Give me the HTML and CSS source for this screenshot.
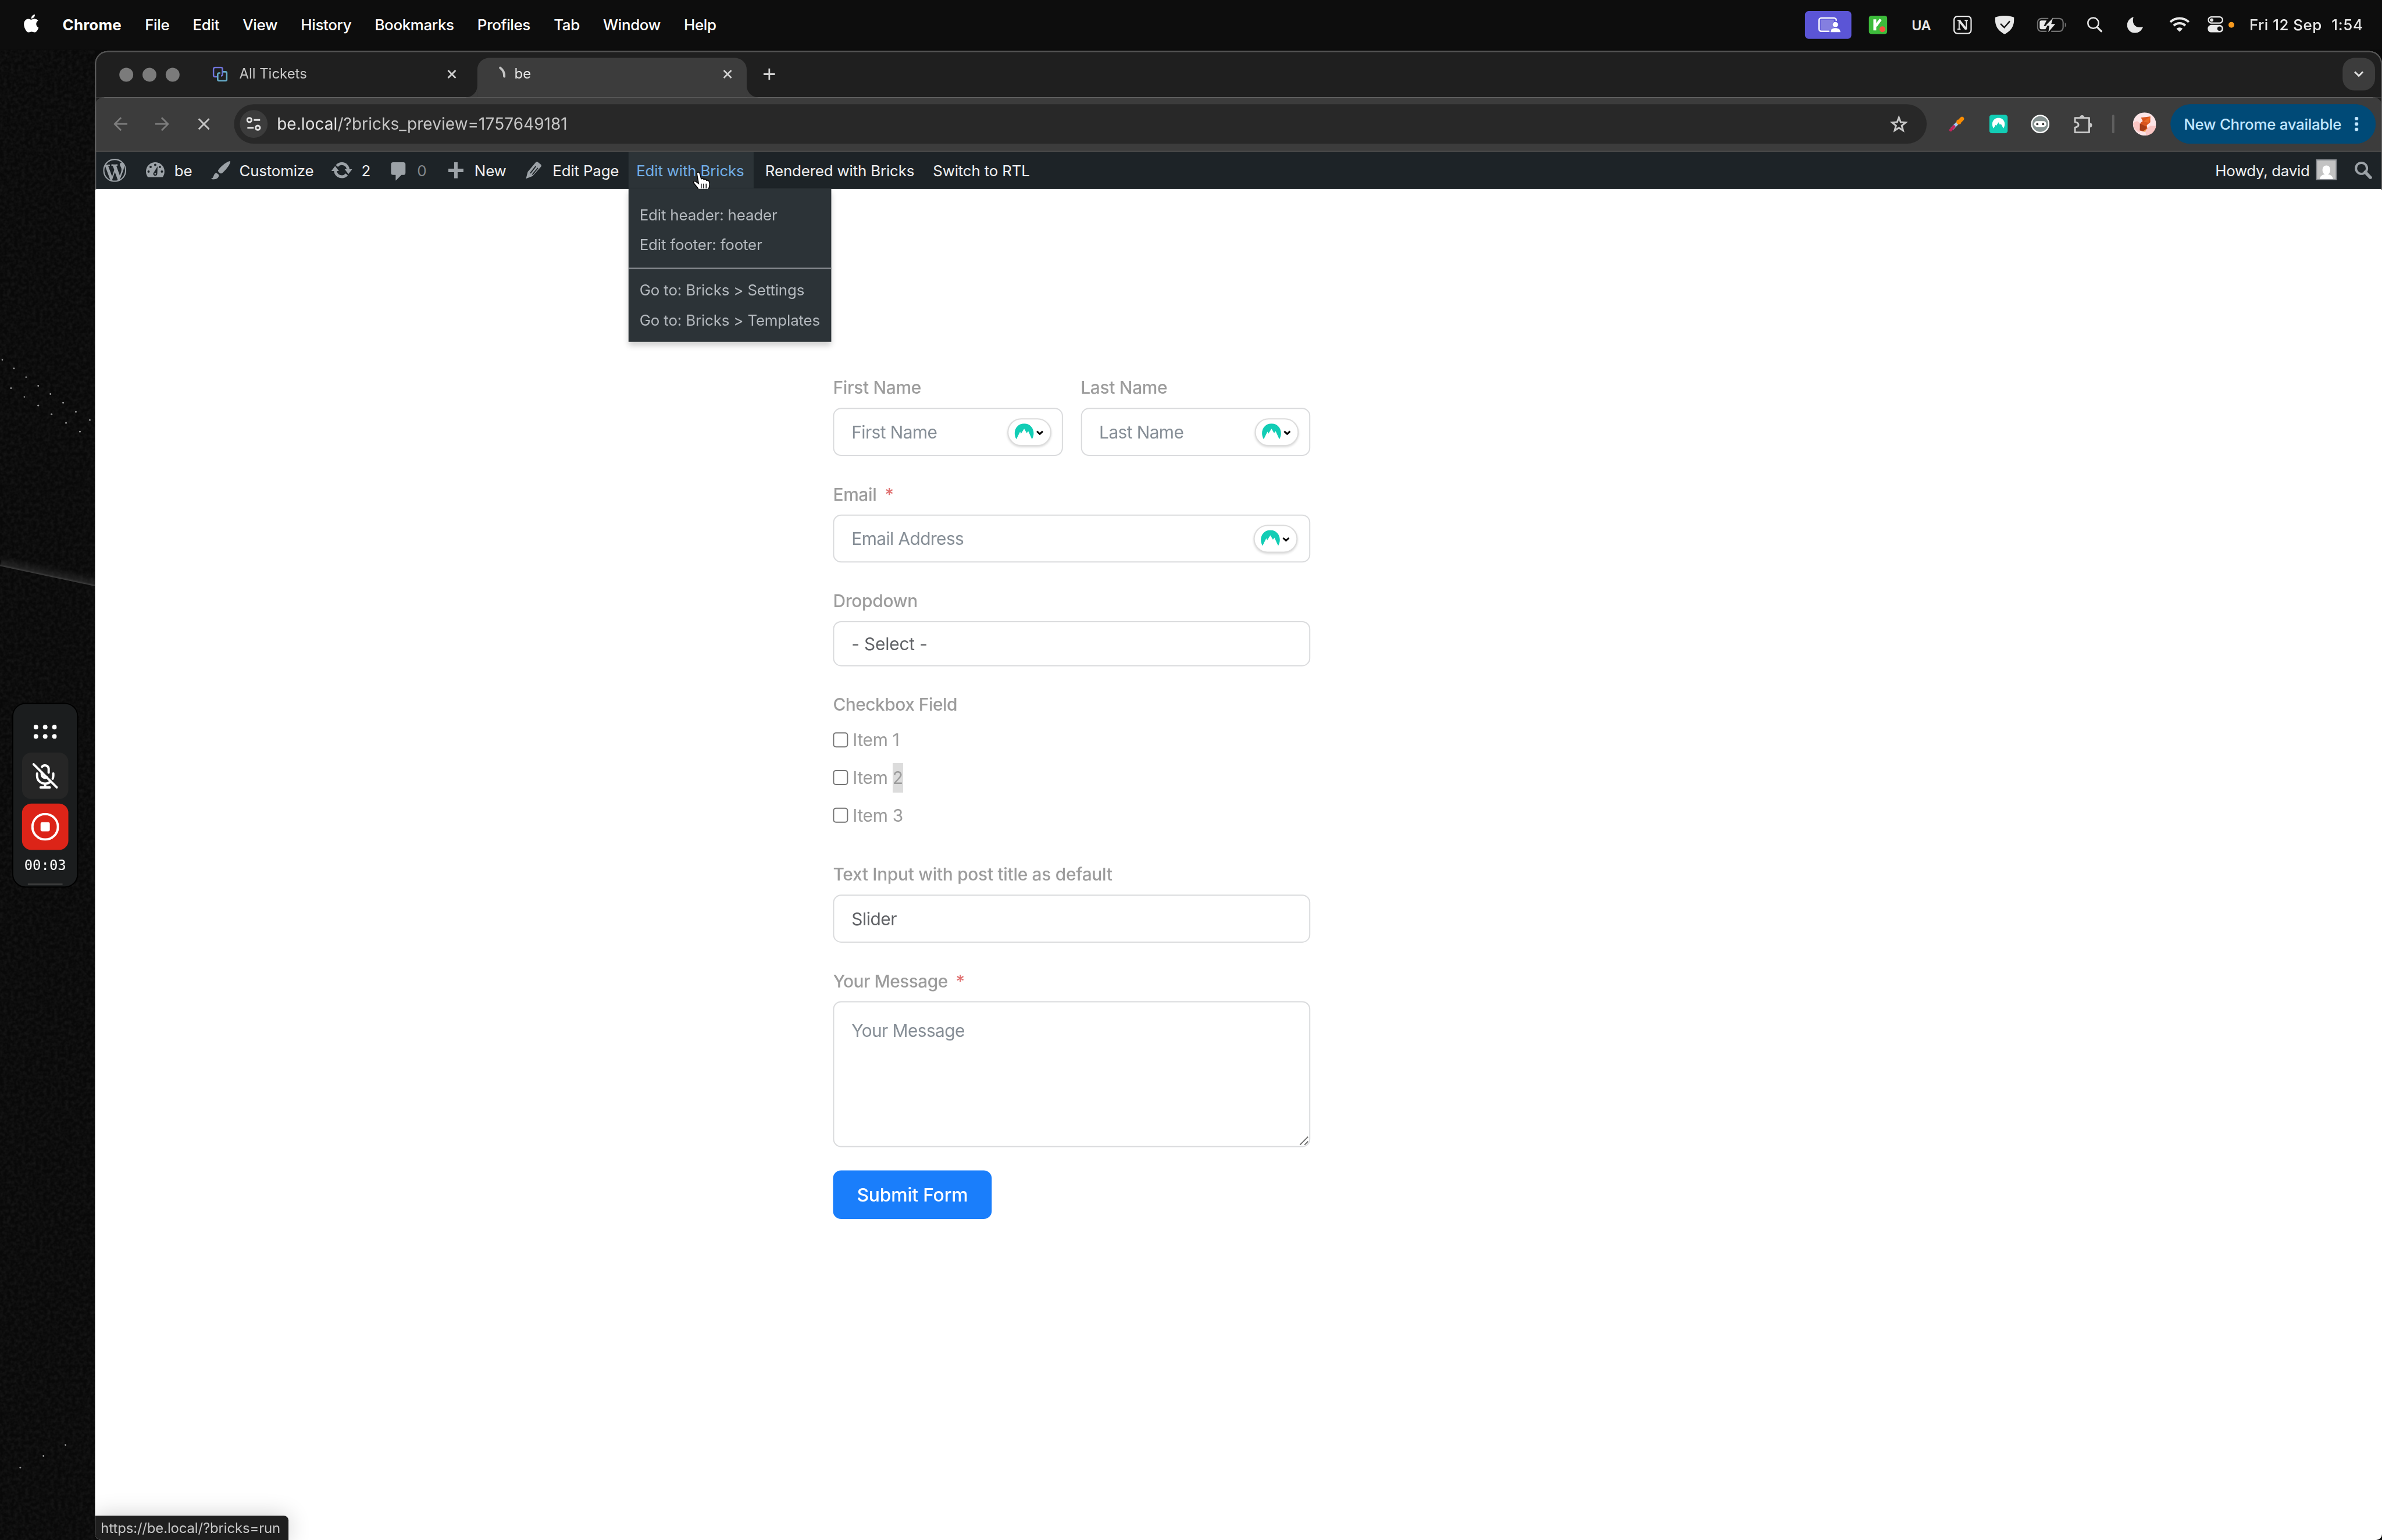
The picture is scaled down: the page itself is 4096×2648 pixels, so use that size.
FILE: index.html
```html
<!DOCTYPE html>
<html lang="en">
<head>
  <meta charset="UTF-8">
  <meta name="viewport" content="width=device-width, initial-scale=1.0">
  <title>be</title>
  <link rel="stylesheet" href="styles.css">
</head>
<body>
<div class="screen">

  <!-- macOS menu bar -->
  <div class="menubar">
    <svg class="apple" viewBox="2 0 20 24" preserveAspectRatio="none" fill="#fff"><path d="M12.152 6.896c-.948 0-2.415-1.078-3.96-1.04-2.04.027-3.91 1.183-4.961 3.014-2.117 3.675-.546 9.103 1.519 12.09 1.013 1.454 2.208 3.09 3.792 3.039 1.52-.065 2.09-.987 3.935-.987 1.831 0 2.35.987 3.96.948 1.637-.026 2.676-1.48 3.676-2.948 1.156-1.688 1.636-3.325 1.662-3.415-.039-.013-3.182-1.221-3.22-4.857-.026-3.04 2.48-4.494 2.597-4.559-1.429-2.09-3.623-2.324-4.39-2.376-2-.156-3.675 1.09-4.61 1.09zM15.53 3.83c.843-1.012 1.4-2.427 1.245-3.83-1.207.052-2.662.805-3.532 1.818-.78.896-1.454 2.338-1.273 3.714 1.338.104 2.715-.688 3.559-1.701"/></svg>
    <div class="menus">
      <span class="app">Chrome</span>
      <span>File</span>
      <span>Edit</span>
      <span>View</span>
      <span>History</span>
      <span>Bookmarks</span>
      <span>Profiles</span>
      <span>Tab</span>
      <span>Window</span>
      <span>Help</span>
    </div>
    <div class="status">
      <div class="sharing">
        <svg width="40" height="28" viewBox="0 0 40 28"><rect x="5" y="5" width="23" height="18" rx="1" fill="#fff" opacity=".25"/><path d="M20 25H6a4 4 0 0 1-4-4V6a4 4 0 0 1 4-4h22a4 4 0 0 1 4 4v1" fill="none" stroke="#fff" stroke-width="2.4"/><circle cx="30.500" cy="13.500" r="4.500" fill="#fff"/><path d="M22 26.500c0-5 4-7 8.500-7s8.500 2 8.500 7z" fill="#fff"/></svg>
      </div>
      <svg class="krisp" width="32" height="32" viewBox="0 0 32 32"><rect width="32" height="32" rx="5" fill="#3dbb3b"/><path d="M10.500 6.500v19" stroke="#fff" stroke-width="5"/><path d="M20.500 6.500L12 18" stroke="#fff" stroke-width="4.500"/><circle cx="23.500" cy="23.500" r="5" fill="#fb5240"/></svg>
      <span class="lang">UA</span>
      <svg class="notion" width="32" height="32" viewBox="0 0 32 32"><rect x="1.200" y="1.200" width="29.600" height="29.600" rx="6" fill="none" stroke="#e8e8e8" stroke-width="2.400"/><path d="M7 8.500h5.500M19.500 8.500h5.500M7 23.500h5.500M10 9v14M22.500 9v15" stroke="#e8e8e8" stroke-width="2" fill="none"/><path d="M10.500 9l11.500 14.500" stroke="#e8e8e8" stroke-width="4"/></svg>
      <svg class="shield" width="33" height="32" viewBox="0 0 33 32"><path d="M16.500 0c5 0 11 1 16.500 3 0 12-2 21-16.500 29C2 24 0 15 0 3 5.500 1 11.500 0 16.500 0z" fill="#e8e8e8"/><path d="M9.500 14l6.500 6.500L25.500 9.500" fill="none" stroke="#111" stroke-width="2.400"/></svg>
      <svg class="battery" width="52" height="26" viewBox="0 0 52 26"><path d="M20 2H8a6.500 6.500 0 0 0-6.500 6.500v9A6.500 6.500 0 0 0 8 24h9M27 2h12a6.500 6.500 0 0 1 6.500 6.500v9A6.500 6.500 0 0 1 39 24H25" fill="none" stroke="#6f6f6f" stroke-width="2.200"/><path d="M48.500 9c3 1.500 3 6.500 0 8z" fill="#6f6f6f"/><path d="M8 5.500h9L12 15h6l-3 5.500H8A3 3 0 0 1 5 17.500v-9a3 3 0 0 1 3-3z" fill="#e8e8e8"/><path d="M28 1L15 14.500h7L20 25.500 32 11.500h-7z" fill="#e8e8e8"/></svg>
      <svg class="spotlight" width="26" height="27" viewBox="0 0 26 27" fill="none" stroke="#e8e8e8" stroke-width="2.600" stroke-linecap="round"><circle cx="10.500" cy="10.800" r="9.200"/><path d="M17.500 18l7 7" stroke-width="3.200"/></svg>
      <svg class="moon" width="28" height="28" viewBox="0 0 28 28"><path d="M11 .3C7.500 12 14 20.500 27.500 17.500 25 24 20 28 13.500 28 6 28 0 22 0 14.500 0 8 4.500 2 11 .3z" fill="#e8e8e8"/></svg>
      <svg class="wifi" width="35" height="26" viewBox="0 0 35 26" fill="none" stroke="#e8e8e8" stroke-width="4"><path d="M1.500 9a23 23 0 0 1 32 0"/><path d="M7.500 15.200a14.500 14.500 0 0 1 20 0"/><path d="M17.500 26l-5.300-5.400c3-2.800 7.600-2.800 10.600 0z" fill="#e8e8e8" stroke="none"/></svg>
      <svg class="control" width="27" height="28" viewBox="0 0 27 28"><rect x="1.200" y="1.200" width="24.600" height="10.600" rx="5.300" fill="none" stroke="#e8e8e8" stroke-width="2.200"/><circle cx="7" cy="6.500" r="3" fill="#e8e8e8"/><rect y="15" width="27" height="13" rx="6.500" fill="#e8e8e8"/><circle cx="20.500" cy="21.500" r="3.800" fill="#111"/></svg>
      <span class="mic-dot"></span>
      <span class="date">Fri 12 Sep</span>
      <span class="time">1:54</span>
    </div>
  </div>

  <div class="desktop">
    <!-- Visible strip of wallpaper with the recorder widget -->
    <div class="side">
      <svg class="wallpaper" width="164" height="2572" viewBox="0 86 164 2572">
        <defs>
          <filter id="grain" x="0" y="0" width="100%" height="100%">
            <feTurbulence type="fractalNoise" baseFrequency="0.16" numOctaves="2" seed="4"/>
            <feColorMatrix values="0 0 0 0 1  0 0 0 0 1  0 0 0 0 1  0.1 0 0 0 -0.035"/>
          </filter>
          <linearGradient id="streak" x1="0" y1="0" x2="0" y2="1">
            <stop offset="0" stop-color="#3c3c3c" stop-opacity="0"/>
            <stop offset=".8" stop-color="#3c3c3c" stop-opacity=".45"/>
            <stop offset="1" stop-color="#484848" stop-opacity=".9"/>
          </linearGradient>
        </defs>
        <rect y="86" width="164" height="2572" fill="#090909"/>
        <rect y="86" width="164" height="2572" filter="url(#grain)"/>
        <rect x="0" y="958" width="168" height="19" fill="url(#streak)" transform="rotate(12 0 977)"/>
        <g fill="#9a9a9a">
          <circle cx="4" cy="621" r="1.300"/><circle cx="24" cy="636" r="1.500"/><circle cx="45" cy="651" r="1.300"/><circle cx="66" cy="666" r="1.500"/><circle cx="87" cy="680" r="1.500"/><circle cx="109" cy="695" r="1.500"/><circle cx="131" cy="711" r="1.500"/><circle cx="155" cy="725" r="1.500"/>
          <circle cx="19" cy="670" r="1.500"/><circle cx="42" cy="685" r="1.300"/><circle cx="66" cy="700" r="1.500"/><circle cx="89" cy="715" r="1.500"/><circle cx="114" cy="730" r="1.500"/><circle cx="138" cy="745" r="1.500"/>
          <circle cx="35" cy="2533" r="1.500"/><circle cx="75" cy="2513" r="1.500"/><circle cx="113" cy="2494" r="1.500"/>
        </g>
      </svg>
      <div class="recorder">
        <svg class="drag" width="40" height="24" viewBox="0 0 40 24" fill="#fff"><circle cx="4" cy="4" r="4"/><circle cx="20" cy="4" r="4"/><circle cx="36" cy="4" r="4"/><circle cx="4" cy="20" r="4"/><circle cx="20" cy="20" r="4"/><circle cx="36" cy="20" r="4"/></svg>
        <div class="rec-btn">
          <svg width="44" height="46" viewBox="0 0 44 46" fill="none" stroke="#fff" stroke-width="4" stroke-linecap="round"><path d="M16.500 7.500a6.500 6.500 0 0 1 11.500 3v7"/><path d="M16 17v3c0 5 5 8 9 5.500"/><path d="M8 19v4c0 8 6 13.500 14 13.500 4 0 7-1.500 9.500-3.500M36 19v4c0 2-.5 3.500-1 5M22 37v6M14 43h16"/><path d="M2 3l40 40"/></svg>
        </div>
        <div class="rec-btn stop">
          <svg width="48" height="48" viewBox="0 0 48 48"><circle cx="24" cy="24" r="22" fill="none" stroke="#fff" stroke-width="4"/><rect x="16" y="16" width="16" height="16" rx="3" fill="#fff"/></svg>
        </div>
        <span class="timer">00:03</span>
        <span class="grip"></span>
      </div>
    </div>

    <!-- Browser window -->
    <div class="window">
      <div class="tabstrip">
        <div class="lights"><i></i><i></i><i></i></div>
        <div class="tab">
          <svg width="26" height="26" viewBox="0 0 26 26" fill="none" stroke-width="2.600"><path d="M8.500 17.500H4a2.500 2.500 0 0 1-2.500-2.500V4A2.500 2.500 0 0 1 4 1.500h10.500A2.500 2.500 0 0 1 17 4v9.500a2.500 2.500 0 0 1-2.500 2.500" stroke="#6f74da"/><path d="M17.500 8.800H22a2.500 2.500 0 0 1 2.500 2.500V22a2.500 2.500 0 0 1-2.500 2.500H11.300A2.500 2.500 0 0 1 8.800 22v-8.500a2.500 2.500 0 0 1 2.500-2.500h2" stroke="#66abc9"/></svg>
          <span class="title">All Tickets</span>
          <svg class="close" width="16" height="16" viewBox="0 0 16 16"><path d="M1.500 1.500l13 13M14.500 1.500l-13 13"/></svg>
        </div>
        <div class="tab active">
          <svg width="32" height="32" viewBox="0 0 32 32"><path d="M19.500 5A17 17 0 0 1 26.500 20" fill="none" stroke="#c4c4c4" stroke-width="4" stroke-linecap="round"/></svg>
          <span class="title">be</span>
          <svg class="close" width="16" height="16" viewBox="0 0 16 16"><path d="M1.500 1.500l13 13M14.500 1.500l-13 13"/></svg>
        </div>
        <svg class="plus" width="20" height="20" viewBox="0 0 20 20"><path d="M10 0v20M0 10h20" stroke="#d0d0d0" stroke-width="2.800"/></svg>
        <div class="tab-search">
          <svg width="18" height="12" viewBox="0 0 18 12"><path d="M2 2l7 7 7-7" fill="none" stroke="#e3e3e3" stroke-width="3"/></svg>
        </div>
      </div>

      <div class="toolbar">
        <svg class="back" width="24" height="24" viewBox="0 0 24 24"><path d="M24 12H2M13 1L2 12l11 11"/></svg>
        <svg class="forward" width="24" height="24" viewBox="0 0 24 24"><path d="M0 12h22M11 1l11 11-11 11"/></svg>
        <svg class="stop-load" width="20" height="20" viewBox="0 0 20 20"><path d="M1 1l18 18M19 1L1 19"/></svg>
        <div class="omnibox">
          <div class="site">
            <svg width="26" height="24" viewBox="0 0 26 24" fill="none" stroke="#e3e3e3" stroke-width="3"><circle cx="5.500" cy="5" r="3.700"/><path d="M13 5h11M2 18.500h11"/><circle cx="20" cy="18.500" r="3.700"/></svg>
          </div>
          <span class="url"><b>be.local</b>/?bricks_preview=1757649181</span>
          <svg class="star" width="32" height="30" viewBox="0 0 32 30"><path d="M16 3.800l3.100 8 8.500.6-6.600 5.400 2.200 8.400-7.200-4.700-7.200 4.700 2.200-8.400-6.600-5.400 8.500-.6z" fill="none" stroke="#c7c7c7" stroke-width="3"/></svg>
        </div>
        <svg class="picker" width="26" height="26" viewBox="0 0 26 26"><path d="M4.500 21.500L15 10.500" stroke="#a9c9f2" stroke-width="5.500"/><path d="M2.500 23.500L8 17.500" stroke="#c2255c" stroke-width="5" stroke-linecap="round"/><path d="M16 10L22 4" stroke="#fb8c00" stroke-width="7" stroke-linecap="round"/><path d="M13.500 6.500l6 6" stroke="#fb8c00" stroke-width="3.500"/></svg>
        <svg class="nord" width="32" height="32" viewBox="0 0 32 32"><rect width="32" height="32" rx="5" fill="#12cdb5"/><path d="M7.500 23.500C2.500 16 6 5.500 16 5.500S29.500 16 24.500 23.500l-4.500-8-1.500 2-2.500-4.500-4 6-1-1.500z" fill="#fff"/></svg>
        <svg class="ninja" width="32" height="32" viewBox="0 0 32 32"><circle cx="16" cy="16" r="14.800" fill="#84908f" stroke="#fff" stroke-width="2.400"/><rect x="5.500" y="11" width="21" height="10" rx="5" fill="#fff"/><circle cx="11" cy="16" r="2" fill="#333"/><circle cx="21" cy="16" r="2" fill="#333"/></svg>
        <svg class="puzzle" width="32" height="32" viewBox="0 0 32 32"><path d="M3 5.500h23.500v25H2v-8.500c5-1 6-2.500 6-4.500s-1-4-6-5V5.500z" fill="none" stroke="#c7c7c7" stroke-width="3" stroke-linejoin="round"/><path d="M10 5a4.200 4.200 0 0 1 8.400 0zM27.500 14a4 4 0 0 1 0 8z" fill="#c7c7c7"/></svg>
        <span class="divider"></span>
        <svg class="profile" width="40" height="40" viewBox="0 0 40 40"><circle cx="20" cy="20" r="20" fill="#fce4e6"/><path d="M0 19c5-5 9-5 12 0v15c-7-1-11-8-12-15zM21 31l9-8h10c-1 9-8 16-17 17z" fill="#fac5c3"/><path d="M14 9l16-2v10l-6 5 1 6-7 5-6-2 1-13 4-3z" fill="#d9541e"/><path d="M12 19l12 6-4 7-8-1z" fill="#a63c17"/><path d="M30 7l-12 9 10 2z" fill="#e86a28"/><path d="M18 32l5-3-2 5z" fill="#f2a047"/></svg>
        <div class="update-pill">
          <span>New Chrome available</span>
          <i class="dots"></i>
        </div>
      </div>

      <!-- WordPress admin bar -->
      <div class="adminbar">
        <div class="ab-item ab-logo">
          <svg width="40" height="40" viewBox="0 0 20 20"><path d="M20 10c0-5.510-4.490-10-10-10C4.480 0 0 4.490 0 10c0 5.520 4.480 10 10 10 5.510 0 10-4.480 10-10zM7.780 15.370L4.370 6.220c.55-.02 1.170-.08 1.170-.08.5-.06.44-1.130-.06-1.110 0 0-1.450.11-2.370.11-.18 0-.37 0-.58-.01C4.120 2.690 6.870 1.110 10 1.110c2.330 0 4.450.87 6.050 2.340-.68-.11-1.650.39-1.650 1.580 0 .74.45 1.360.9 2.100.35.61.55 1.360.55 2.460 0 1.490-1.400 5-1.400 5l-3.030-8.370c.54-.02.82-.17.82-.17.5-.05.44-1.250-.06-1.220 0 0-1.440.12-2.380.12-.87 0-2.330-.12-2.330-.12-.5-.03-.56 1.200-.06 1.220l.92.08 1.260 3.410zM17.410 10c.24-.64.74-1.870.43-4.250.7 1.290 1.050 2.710 1.050 4.250 0 3.290-1.730 6.240-4.400 7.780.97-2.590 1.940-5.200 2.920-7.780zM6.100 18.090C3.120 16.650 1.110 13.530 1.110 10c0-1.300.23-2.480.72-3.590C3.250 10.300 4.670 14.200 6.100 18.090zm4.030-6.630l2.580 6.980c-.86.29-1.760.45-2.710.45-.79 0-1.570-.11-2.290-.33.81-2.380 1.620-4.740 2.420-7.100z"/></svg>
        </div>
        <div class="ab-item ab-site">
          <svg width="32" height="26" viewBox="0 0 32 26"><path d="M3.500 26h25a16 16 0 1 0-25 0z"/><g fill="#1d2327"><circle cx="4.500" cy="16" r="2"/><circle cx="8" cy="8" r="2"/><circle cx="16" cy="4.500" r="2"/><circle cx="24" cy="8" r="2"/><circle cx="27.500" cy="16" r="2"/><path d="M20 7l-.5 13a3.500 3.500 0 1 1-6-2.500z"/></g><circle cx="16" cy="20" r="1.500"/></svg>
          <span>be</span>
        </div>
        <div class="ab-item ab-customize">
          <svg width="34" height="32" viewBox="0 0 34 32"><path d="M33.500 0C28 .5 20 7 14.500 13c-2.500 3-2.500 4.500-1 6l2 1.500c1.500 1.500 3.500 1 6-1.500C27.500 13.500 34 5 33.500 0z"/><path d="M10 20.500c-5 .5-4.500 5-6.500 8-1 1.500-2.500 2-3.500 2.500 5 1.500 13.500 1 14-7z"/></svg>
          <span>Customize</span>
        </div>
        <div class="ab-item ab-updates">
          <svg width="36" height="28" viewBox="0 0 36 28"><path d="M9.500 6.500A11 11 0 0 1 29 13M26.500 21A11 11 0 0 1 7 15" fill="none" stroke="#9ca2a7" stroke-width="5"/><path d="M0 15L6.500 6.500 13 15zM23 12h13l-6.500 8.500z"/></svg>
          <span>2</span>
        </div>
        <div class="ab-item ab-comments">
          <svg width="36" height="32" viewBox="0 0 36 32"><path d="M9 0h17a4 4 0 0 1 4 4v14a4 4 0 0 1-4 4h-3L13 32V22H9a4 4 0 0 1-4-4V4a4 4 0 0 1 4-4z"/></svg>
          <span class="muted">0</span>
        </div>
        <div class="ab-item ab-new">
          <svg width="28" height="28" viewBox="0 0 28 28"><path d="M10 0h6v11h10v6H16v11h-6V17H0v-6h10z"/></svg>
          <span>New</span>
        </div>
        <div class="ab-item ab-edit">
          <svg width="32" height="30" viewBox="0 0 32 30"><path d="M19.500 1.500c1-1.300 2.500-1.700 4-.8l5 4c1.300 1.200 1.300 2.500.5 3.800L14.500 25 3 29.500l3-12z"/><path d="M20 8l-9.500 12M23.500 11L14 22.500" stroke="#1d2327" stroke-width="1.800"/></svg>
          <span>Edit Page</span>
        </div>
        <div class="ab-item ab-bricks hover">
          <span>Edit with Bricks</span>
          <div class="submenu">
            <a>Edit header: header</a>
            <a>Edit footer: footer</a>
            <hr>
            <a>Go to: Bricks &gt; Settings</a>
            <a>Go to: Bricks &gt; Templates</a>
          </div>
        </div>
        <div class="ab-item ab-rendered"><span>Rendered with Bricks</span></div>
        <div class="ab-item ab-rtl"><span>Switch to RTL</span></div>
        <div class="ab-item ab-account">
          <span>Howdy, david</span>
          <svg width="36" height="36" viewBox="0 0 36 36"><rect x="1" y="1" width="34" height="34" fill="#c3c3c3" stroke="#8c8f94" stroke-width="2"/><path d="M18 10.500c8.500 0 8.500 13 2.500 15.500 6 1 8.500 4 9 8H6.500c.5-4 3-7 9-8-6-2.500-6-15.500 2.500-15.500z" fill="#fff"/></svg>
        </div>
        <div class="ab-item ab-search">
          <svg width="30" height="30" viewBox="0 0 30 30" fill="none" stroke="#9ca2a7"><circle cx="11.500" cy="11.500" r="9.500" stroke-width="4" fill="none"/><path d="M18 18l9 9.500" stroke-width="5.500" stroke-linecap="round"/></svg>
        </div>
      </div>

      <div class="page">
        <form class="form">
          <div class="row">
            <div class="group">
              <label>First Name</label>
              <div class="control-wrap">
                <input type="text" placeholder="First Name">
                <span class="nord-chip"><svg width="62" height="28" viewBox="0 0 62 28"><path d="M3.500 27C-4 14 4 0 17 0s21 14 13.500 27l-6.500-14-2.500 3.500L17 9l-5.500 8.500L10 14z" fill="#12cdb5"/><path d="M39 13.500l5 4.500 5-4.500" fill="none" stroke="#000" stroke-width="3"/></svg></span>
              </div>
            </div>
            <div class="group">
              <label>Last Name</label>
              <div class="control-wrap">
                <input type="text" placeholder="Last Name">
                <span class="nord-chip"><svg width="62" height="28" viewBox="0 0 62 28"><path d="M3.500 27C-4 14 4 0 17 0s21 14 13.500 27l-6.500-14-2.500 3.500L17 9l-5.500 8.500L10 14z" fill="#12cdb5"/><path d="M39 13.500l5 4.500 5-4.500" fill="none" stroke="#000" stroke-width="3"/></svg></span>
              </div>
            </div>
          </div>
          <div class="group">
            <label>Email<em>*</em></label>
            <div class="control-wrap">
              <input type="text" placeholder="Email Address">
              <span class="nord-chip wide"><svg width="62" height="28" viewBox="0 0 62 28"><path d="M3.500 27C-4 14 4 0 17 0s21 14 13.500 27l-6.500-14-2.500 3.500L17 9l-5.500 8.500L10 14z" fill="#12cdb5"/><path d="M39 13.500l5 4.500 5-4.500" fill="none" stroke="#000" stroke-width="3"/></svg></span>
            </div>
          </div>
          <div class="group">
            <label>Dropdown</label>
            <select><option>- Select -</option></select>
          </div>
          <div class="group checks">
            <label>Checkbox Field</label>
            <div class="check"><input type="checkbox"><span>Item 1</span></div>
            <div class="check"><input type="checkbox"><span>Item <mark>2</mark></span></div>
            <div class="check"><input type="checkbox"><span>Item 3</span></div>
          </div>
          <div class="group">
            <label>Text Input with post title as default</label>
            <input type="text" value="Slider">
          </div>
          <div class="group">
            <label class="message">Your Message<em>*</em></label>
            <div class="control-wrap">
              <textarea placeholder="Your Message"></textarea>
              <svg class="resize" width="16" height="16" viewBox="0 0 16 16"><path d="M1 15L15 1M9 15l6-6" stroke="#666" stroke-width="1.800"/></svg>
            </div>
          </div>
          <button type="button" class="submit">Submit Form</button>
        </form>
      </div>

      <div class="link-status">https://be.local/?bricks=run</div>
    </div>
  </div>

  <!-- Pointer -->
  <svg class="cursor" width="34" height="38" viewBox="0 0 34 38"><path d="M8 4c-.5-3.500 4-4 5-.5L15.500 13c1.500-1.500 4-1 4.500 1 2-1.500 4-.5 4.500 1.500 2.500-1 4.500.5 5 3 .8 4 .5 8-1.500 12l-1 3.500H12.500L9 28 3 20.500c-2-3 1-5 3.500-3l4.500 3.500z" fill="#fff" stroke="#000" stroke-width="1.500"/><path d="M15.500 21v8M19.700 21v8M24 21v8" stroke="#000" stroke-width="1.500"/></svg>
</div>
</body>
</html>
```
FILE: styles.css
```css
/* General Styles */
* {
  margin: 0;
  padding: 0;
  box-sizing: border-box;
}

body {
  width: 4096px;
  height: 2648px;
  overflow: hidden;
  background: #0a0a0a;
  font-family: Inter, "Liberation Sans", sans-serif;
}

svg {
  display: block;
  flex: none;
}

.screen {
  position: relative;
  width: 4112px;
  height: 2658px;
  display: flex;
  flex-direction: column;
  transform: scale(0.99611, 0.99624);
  transform-origin: 0 0;
}

/* Menu bar */
.menubar {
  display: flex;
  align-items: center;
  height: 86px;
  padding: 0 33px 0 41px;
  background: #0d0d0d;
  color: #fff;
  font-size: 26px;
  font-weight: 500;
  letter-spacing: -0.35px;
  white-space: pre;
}

.apple {
  width: 26px;
  height: 31px;
  margin-top: -5px;
}

.menus {
  display: flex;
  gap: 40.4px;
  margin: -1px 0 0 41px;
}

.app {
  font-weight: 700;
  letter-spacing: 0.2px;
}

.status {
  display: flex;
  align-items: center;
  margin-left: auto;
  color: #e8e8e8;
}

.sharing {
  display: flex;
  align-items: center;
  width: 80px;
  height: 48px;
  padding-left: 22px;
  border-radius: 6px;
  background: #5b55d6;
}

.krisp { margin-left: 30px; }

.lang {
  width: 36px;
  margin-left: 42px;
  font-size: 23.5px;
  font-weight: 600;
}

.notion { margin-left: 36px; }
.shield { margin-left: 40px; }
.battery { margin-left: 39px; }
.spotlight { margin: -2px 0 0 35px; }
.moon { margin-left: 43px; }
.wifi { margin: -2px 0 0 45px; }
.control { margin: -2px 0 0 31px; }

.mic-dot {
  width: 10px;
  height: 10px;
  margin-left: 9px;
  border-radius: 50%;
  background: #f79a1f;
}

.date {
  width: 142px;
  margin: -2px 0 0 26px;
  letter-spacing: 0.5px;
}

.time {
  width: 54px;
  margin-top: -2px;
  letter-spacing: 0.7px;
}

.desktop {
  display: flex;
  flex: 1;
  min-height: 0;
}

/* Wallpaper and recorder */
.side {
  position: relative;
  width: 164px;
  padding: 1127px 0 0 21px;
}

.wallpaper {
  position: absolute;
  top: 0;
  left: 0;
}

.recorder {
  position: relative;
  display: flex;
  flex-direction: column;
  align-items: center;
  width: 114px;
  height: 319px;
  padding-top: 36px;
  border: 2px solid #000;
  border-radius: 23px;
  background: #1b1d1e;
}

.rec-btn {
  display: flex;
  align-items: center;
  justify-content: center;
  width: 80px;
  height: 80px;
  margin-top: 24px;
  border-radius: 16px;
  background: #262626;
}

.rec-btn.stop {
  margin-top: 8px;
  background: #dc2418;
}

.timer {
  margin-top: 12px;
  color: #fff;
  font: 24px/30px "DejaVu Sans Mono", monospace;
}

.grip {
  width: 60px;
  height: 2px;
  margin-top: 16px;
  background: #444;
}

/* Browser window */
.window {
  position: relative;
  display: flex;
  flex-direction: column;
  flex: 1;
  margin-top: 2px;
  border-radius: 22px 22px 10px 10px;
  overflow: hidden;
  background: #fff;
}

.window::after {
  content: "";
  position: absolute;
  top: 0;
  left: 0;
  right: 0;
  height: 238px;
  border: 2px solid #626262;
  border-bottom: none;
  border-radius: 22px 22px 0 0;
  opacity: 0.8;
}

.tabstrip {
  display: flex;
  align-items: flex-start;
  height: 80px;
  padding: 12px 12px 0 42px;
  background: #1f1f1f;
}

.lights {
  display: flex;
  gap: 16px;
  padding-top: 17px;
}

.lights i {
  width: 24px;
  height: 24px;
  border-radius: 50%;
  background: #7b7b7b;
}

.tab {
  display: flex;
  align-items: center;
  width: 457px;
  height: 56px;
  padding: 0 36px 0 0;
  margin-left: 57px;
  color: #c7c7c7;
  font-size: 24px;
}

.tab .title {
  margin: -1px 0 0 20px;
}

.close {
  margin-left: auto;
  fill: none;
  stroke: #d0d0d0;
  stroke-width: 2.8;
}

.tab.active {
  position: relative;
  width: 465px;
  height: 68px;
  margin-left: 0;
  padding: 0 25px 12px 20px;
  border-radius: 20px 20px 0 0;
  background: #3c3c3c;
  color: #e3e3e3;
}

.tab.active .title {
  margin-left: 12px;
}

.tab.active::before,
.tab.active::after {
  content: "";
  position: absolute;
  bottom: 0;
  width: 20px;
  height: 20px;
}

.tab.active::before {
  left: -20px;
  background: radial-gradient(circle at 0 0, transparent 19.5px, #3c3c3c 20.5px);
}

.tab.active::after {
  right: -20px;
  background: radial-gradient(circle at 100% 0, transparent 19.5px, #3c3c3c 20.5px);
}

.plus {
  margin: 18px 0 0 29px;
}

.tab-search {
  display: flex;
  align-items: center;
  justify-content: center;
  width: 56px;
  height: 56px;
  margin-left: auto;
  border-radius: 20px;
  background: #3c3c3c;
}

.toolbar {
  display: flex;
  align-items: center;
  height: 94px;
  padding: 0 11px 0 32px;
  border-bottom: 2px solid #4a4a4a;
  background: radial-gradient(circle at 16px 16px, #3c3c3c 16px, #1f1f1f 17px) 0 0 / 16px 16px no-repeat,
    radial-gradient(circle at 0 16px, #3c3c3c 16px, #1f1f1f 17px) 100% 0 / 16px 16px no-repeat,
    #3c3c3c;
}

.back,
.forward,
.stop-load {
  fill: none;
  stroke: #7d7d7d;
  stroke-width: 2.8;
}

.forward { margin-left: 48px; }

.stop-load {
  margin-left: 50px;
  stroke: #c7c7c7;
}

.omnibox {
  display: flex;
  align-items: center;
  flex: 1;
  height: 68px;
  margin-left: 42px;
  padding: 0 32px 0 10px;
  border-radius: 34px;
  background: #282828;
}

.site {
  display: flex;
  align-items: center;
  justify-content: center;
  width: 48px;
  height: 48px;
  border-radius: 50%;
  background: #3c3c3c;
}

.url {
  margin-left: 16px;
  color: #c7c7c7;
  font-size: 28px;
  letter-spacing: 0.1px;
}

.url b {
  color: #e3e3e3;
  font-weight: 400;
}

.star { margin-left: auto; }
.picker { margin-left: 39px; }
.nord { margin-left: 43px; }
.ninja { margin-left: 40px; }
.puzzle { margin-left: 42px; }

.divider {
  width: 4px;
  height: 32px;
  margin-left: 34px;
  border-radius: 2px;
  background: #5f5f5f;
}

.profile { margin-left: 32px; }

.update-pill {
  display: flex;
  align-items: center;
  justify-content: space-between;
  width: 354px;
  height: 68px;
  margin-left: 25px;
  padding: 0 30px 0 23px;
  border-radius: 34px;
  background: #004a77;
  color: #c2e7ff;
  font-size: 26px;
  font-weight: 500;
  letter-spacing: -0.3px;
}

.dots {
  width: 6px;
  height: 28px;
  background: radial-gradient(circle, #c2e7ff 2.8px, transparent 3.3px) 0 0 / 6px 9.33px;
}

/* WordPress admin bar */
.adminbar {
  display: flex;
  height: 64px;
  background: #1d2327;
  color: #f0f0f1;
  font-size: 26px;
  letter-spacing: -0.17px;
  white-space: nowrap;
}

.ab-item {
  display: flex;
  align-items: center;
  gap: 16px;
  padding-left: 16px;
  fill: #9ca2a7;
}

.ab-logo {
  width: 72px;
  padding-left: 14px;
}

.ab-site {
  gap: 17px;
  width: 112px;
}

.ab-customize {
  gap: 15px;
  width: 208px;
}

.ab-updates { width: 98px; }

.ab-comments {
  gap: 14px;
  width: 104px;
}

.ab-new {
  gap: 17px;
  width: 132px;
}

.ab-edit {
  gap: 17px;
  width: 195px;
  padding-left: 15px;
}

.ab-comments svg {
  margin-top: 4px;
}

.ab-site svg {
  margin-top: -3px;
}

.muted {
  color: #83888c;
}

.ab-bricks {
  position: relative;
  width: 216px;
  padding-left: 13.5px;
}

.ab-bricks.hover {
  background: #2c3337;
  color: #72aee6;
}

.ab-rendered {
  width: 292px;
  padding-left: 20px;
}

.ab-rtl {
  padding-left: 17.5px;
}

.ab-account {
  gap: 11px;
  margin-left: auto;
  letter-spacing: -0.3px;
}

.ab-account svg {
  margin-top: -2px;
}

.ab-search {
  padding: 0 17px 0 31px;
}

.submenu {
  position: absolute;
  z-index: 2;
  top: 64px;
  left: 0;
  width: 350px;
  height: 264px;
  padding-top: 19px;
  background: #2c3337;
  color: #b4b9be;
  box-shadow: 0 6px 10px rgba(0, 0, 0, 0.2);
}

.submenu a {
  display: block;
  height: 52px;
  padding-left: 19px;
  line-height: 52px;
}

.submenu hr {
  height: 2px;
  margin: 13px 0 11px;
  border: none;
  background: #8c8f94;
}

/* Page form */
.page {
  flex: 1;
  padding: 319px 0 0 1274px;
}

.form {
  display: flex;
  flex-direction: column;
  gap: 42px;
  width: 824px;
  font-size: 30px;
}

.row {
  display: flex;
  gap: 31px;
}

.row .group {
  flex: 1;
}

.group {
  display: flex;
  flex-direction: column;
}

label {
  height: 48px;
  margin-bottom: 11px;
  color: #9c9c9c;
  font-weight: 500;
  line-height: 49px;
  letter-spacing: -0.3px;
}

label em {
  margin-left: 14px;
  color: #e07070;
  font-style: normal;
}

label.message {
  letter-spacing: -0.55px;
}

.control-wrap {
  position: relative;
}

input[type="text"],
select,
textarea {
  display: block;
  width: 100%;
  height: 83px;
  padding: 0 30px;
  border: 2px solid #dadbdd;
  border-radius: 14px;
  outline: none;
  appearance: none;
  background: #fff;
  color: #606266;
  font: 30px Inter, "Liberation Sans", sans-serif;
  letter-spacing: -0.5px;
}

input::placeholder,
textarea::placeholder {
  color: #868e96;
  letter-spacing: -0.6px;
}

select {
  height: 78px;
  letter-spacing: -0.2px;
}

textarea {
  height: 252px;
  padding: 25px 30px;
  line-height: 48px;
  resize: none;
}

.resize {
  position: absolute;
  right: 3px;
  bottom: 3px;
}

.nord-chip {
  position: absolute;
  top: 18px;
  right: 20px;
  width: 76px;
  height: 48px;
  padding: 7px 0 0 10px;
  border: 2px solid #dcdcdc;
  border-radius: 24px;
  background: #fff;
  box-shadow: 0 2px 4px rgba(0, 0, 0, 0.15);
}

.nord-chip.wide {
  right: 22px;
}

.checks {
  margin-bottom: 3px;
}

.checks label {
  margin-bottom: 5px;
  letter-spacing: -0.5px;
}

.check {
  display: flex;
  align-items: center;
  height: 65px;
  color: #9c9c9c;
  letter-spacing: -0.3px;
}

.check input {
  width: 26px;
  height: 26px;
  margin: -2px 8px 0 0;
  border: 2px solid #767676;
  border-radius: 5px;
  appearance: none;
}

.check span {
  line-height: 51px;
}

mark {
  display: inline-block;
  background: #dcdcdc;
  color: inherit;
}

.submit {
  width: 274px;
  height: 84px;
  margin-top: -2px;
  padding-top: 1px;
  border: none;
  border-radius: 14px;
  background: #1a7efb;
  color: #fff;
  font: 500 32px Inter, "Liberation Sans", sans-serif;
  letter-spacing: -0.2px;
}

.link-status {
  position: absolute;
  left: 0;
  bottom: 0;
  width: 334px;
  height: 42px;
  padding-left: 10px;
  border-radius: 0 8px 0 6px;
  background: #1f1f1f;
  color: #c7c7c7;
  font-size: 24px;
  line-height: 43px;
  letter-spacing: -0.13px;
  box-shadow: 0 0 40px rgba(0, 0, 0, 0.2);
}

.cursor {
  position: absolute;
  top: 296px;
  left: 1195px;
}
```
